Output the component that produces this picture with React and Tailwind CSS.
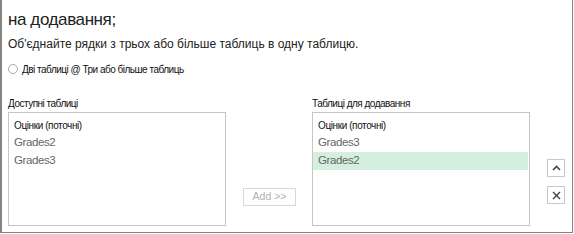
import React from "react";

const font = { fontFamily: '"Liberation Sans", Arial, sans-serif' };

function ListBox({ items, selected }) {
  return (
    <div className="w-[218px] h-[114px] border border-[#c6c6c6] bg-white pt-[3px]">
      {items.map((it, i) => (
        <div
          key={i}
          className={
            "h-[18px] flex items-center pl-[5px] mr-[1px] " +
            (i === selected ? "bg-[#d4efdf] " : "") +
            (it.small
              ? "text-[10px] tracking-[-0.4px] text-[#111]"
              : "text-[11.5px] tracking-[-0.4px] text-[#666]")
          }
        >
          {it.label}
        </div>
      ))}
    </div>
  );
}

export default function App() {
  return (
    <div
      className="w-[573px] h-[233px] border-l-2 border-r border-b border-[#848484] bg-white pl-[6px] pr-[7px] flex flex-col"
      style={font}
    >
      <div className="h-[34px] pt-[8px] text-[17px] tracking-[-0.4px] leading-[24px] text-[#222]">на додавання;</div>
      <div className="h-[20px] text-[12px] leading-[20px] text-[#222]">
        Об'єднайте рядки з трьох або більше таблиць в одну таблицю.
      </div>
      <div className="mt-[6px] h-[18px] flex items-center gap-[4px] text-[10px] tracking-[-0.5px] text-[#111]">
        <span className="w-[10px] h-[10px] rounded-full border border-[#a8a8a8] bg-white" />
        <span>Дві таблиці @ Три або більше таблиць</span>
      </div>
      <div className="mt-[18px] flex">
        <div className="flex flex-col">
          <div className="h-[16px] text-[10px] tracking-[-0.5px] leading-[16px] text-[#111]">Доступні таблиці</div>
          <ListBox
            items={[
              { label: "Оцінки (поточні)", small: true },
              { label: "Grades2" },
              { label: "Grades3" },
            ]}
          />
        </div>
        <div className="ml-[17px] mt-[92px]">
          <div className="w-[53px] h-[18px] border border-[#d8d8d8] flex items-center justify-center text-[10.5px] text-[#b0b0b0]">
            Add &gt;&gt;
          </div>
        </div>
        <div className="ml-[16px] flex flex-col">
          <div className="h-[16px] text-[10px] tracking-[-0.5px] leading-[16px] text-[#111]">Таблиці для додавання</div>
          <ListBox
            items={[
              { label: "Оцінки (поточні)", small: true },
              { label: "Grades3" },
              { label: "Grades2" },
            ]}
            selected={2}
          />
        </div>
        <div className="ml-[17px] mt-[63px] flex flex-col gap-[9px]">
          <div className="w-[18px] h-[18px] border border-[#c8c8c8] flex items-center justify-center">
            <svg width="9" height="6" viewBox="0 0 9 6">
              <path d="M1 5 L4.5 1.5 L8 5" fill="none" stroke="#444" strokeWidth="1.6" />
            </svg>
          </div>
          <div className="w-[18px] h-[18px] border border-[#c8c8c8] flex items-center justify-center">
            <svg width="9" height="9" viewBox="0 0 9 9">
              <path d="M1 1 L8 8 M8 1 L1 8" fill="none" stroke="#444" strokeWidth="1.4" />
            </svg>
          </div>
        </div>
      </div>
    </div>
  );
}
